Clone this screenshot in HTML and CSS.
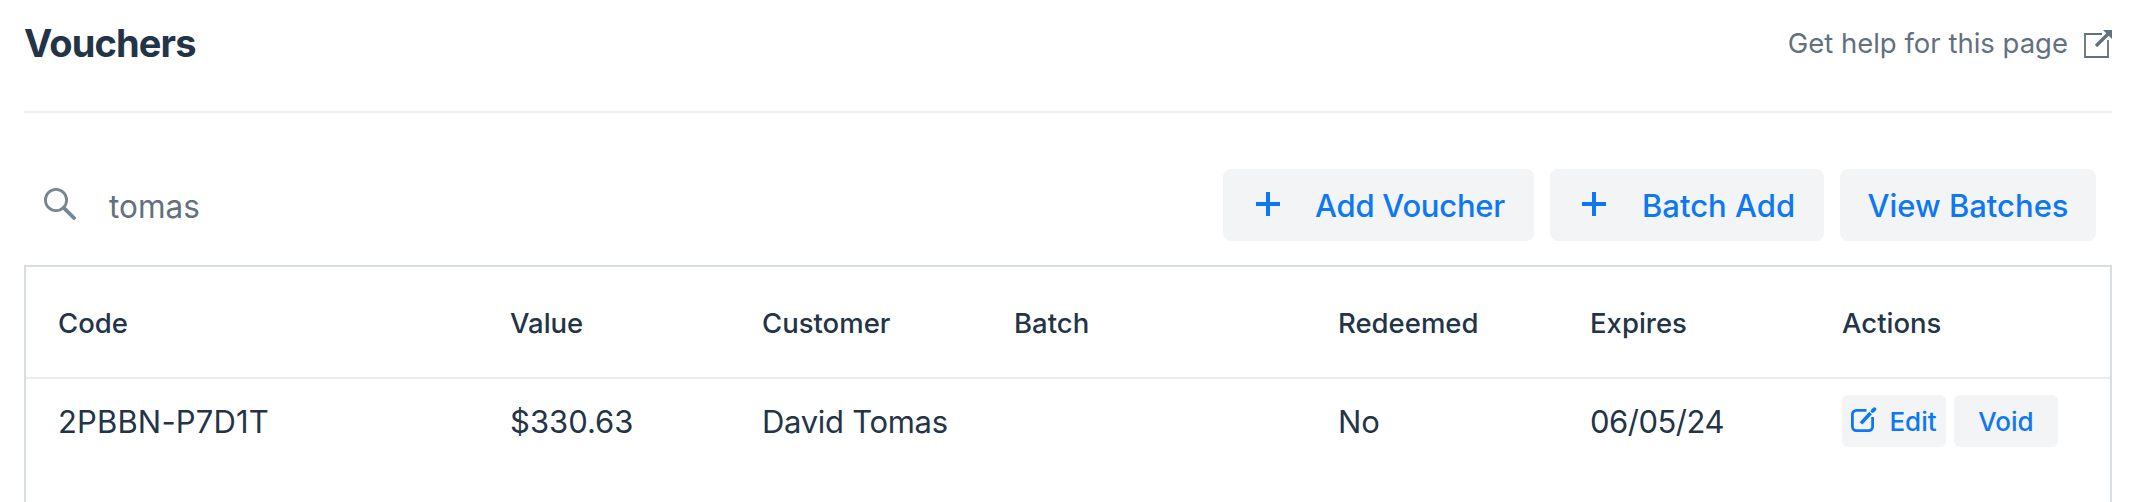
FILE: index.html
```
<!DOCTYPE html>
<html lang="en">
<head>
  <meta charset="utf-8">
  <title>Vouchers</title>
  <link rel="stylesheet" href="styles.css">
</head>
<body>
  <div class="page">
    <header class="page-header">
      <h1>Vouchers</h1>
      <a class="help-link" href="#">
        <span>Get help for this page</span>
        <svg width="28" height="28" viewBox="0 0 28 28" fill="none">
          <path d="M18 4H1v23h23V10" stroke="currentColor" stroke-width="1.8"/>
          <path d="M12 16L24 4" stroke="currentColor" stroke-width="3.4"/>
          <path d="M19 0h9v9z" fill="currentColor"/>
        </svg>
      </a>
    </header>

    <div class="toolbar">
      <label class="search">
        <svg width="32" height="32" viewBox="0 0 32 32" fill="none" stroke="currentColor">
          <circle cx="12" cy="12" r="10.6" stroke-width="2.8"/>
          <path d="M19.8 19.8L30 30" stroke-width="3.8" stroke-linecap="round"/>
        </svg>
        <span>tomas</span>
      </label>
      <div class="toolbar-buttons">
        <button class="btn btn-add">
          <svg width="24" height="24" viewBox="0 0 24 24"><path d="M10 0h4v10h10v4H14v10h-4V14H0v-4h10z" fill="currentColor"/></svg>
          <span>Add Voucher</span>
        </button>
        <button class="btn btn-batch">
          <svg width="24" height="24" viewBox="0 0 24 24"><path d="M10 0h4v10h10v4H14v10h-4V14H0v-4h10z" fill="currentColor"/></svg>
          <span>Batch Add</span>
        </button>
        <button class="btn btn-view"><span>View Batches</span></button>
      </div>
    </div>

    <div class="table">
      <div class="row row-head">
        <div>Code</div>
        <div>Value</div>
        <div>Customer</div>
        <div>Batch</div>
        <div>Redeemed</div>
        <div>Expires</div>
        <div>Actions</div>
      </div>
      <div class="row row-body">
        <div class="code">2PBBN-P7D1T</div>
        <div>$330.63</div>
        <div class="customer">David Tomas</div>
        <div></div>
        <div>No</div>
        <div class="expires">06/05/24</div>
        <div class="actions">
          <button class="btn-small btn-edit">
            <svg width="26" height="26" viewBox="0 0 26 26" fill="none" stroke="currentColor">
              <path d="M15.5 3.4H5.4a4 4 0 0 0-4 4v12.2a4 4 0 0 0 4 4h12.2a4 4 0 0 0 4-4V10" stroke-width="2.8"/>
              <path d="M10 16.4L19.6 6" stroke-width="3.6"/>
              <path d="M21.6 4L23.4 2.2" stroke-width="3.8" stroke-linecap="round"/>
            </svg>
            <span>Edit</span>
          </button>
          <button class="btn-small"><span>Void</span></button>
        </div>
      </div>
    </div>
  </div>
</body>
</html>
```

FILE: styles.css
```
* {
  box-sizing: border-box;
}
body {
  margin: 0;
  height: 502px;
  overflow: hidden;
  background: #fff;
  color: #243447;
  font-family: Inter, sans-serif;
}
svg {
  display: block;
  flex: none;
}
.page {
  height: 502px;
  padding: 0 26px 0 24px;
  display: flex;
  flex-direction: column;
}
.page-header {
  height: 113px;
  flex: none;
  display: flex;
  justify-content: space-between;
  align-items: flex-start;
  border-bottom: 2px solid #eee;
}
h1 {
  margin: 19px 0 0;
  font-size: 38px;
  line-height: 48px;
  font-weight: 700;
  letter-spacing: -0.85px;
}
.help-link {
  margin-top: 24px;
  display: flex;
  gap: 16px;
  align-items: flex-start;
  color: #637080;
  font-size: 27.5px;
  line-height: 38px;
  text-decoration: none;
}
.help-link svg {
  margin-top: 6px;
}
.toolbar {
  height: 152px;
  flex: none;
  display: flex;
  justify-content: space-between;
  padding: 56px 16px 0 20px;
}
.search {
  height: 74px;
  display: flex;
  align-items: center;
  gap: 33px;
  color: #637080;
  font-size: 31.5px;
}
.search svg {
  color: #788593;
  margin-bottom: 4px;
}
.toolbar-buttons {
  display: flex;
  gap: 16px;
}
button {
  border: 0;
  padding: 0;
  background: #f3f4f6;
  color: #0d78f2;
  font-family: inherit;
  font-weight: 500;
  display: flex;
  align-items: center;
}
.btn {
  height: 72px;
  border-radius: 8px;
  font-size: 31px;
}
.btn svg {
  margin-bottom: 2px;
}
.btn-add {
  width: 311px;
  padding-left: 33px;
  gap: 35px;
  letter-spacing: -0.25px;
}
.btn-batch {
  width: 274px;
  padding-left: 32px;
  gap: 36px;
}
.btn-view {
  width: 256px;
  justify-content: center;
}
.table {
  flex: 1;
  border: 2px solid #d9dee2;
  border-bottom: 0;
}
.row {
  display: grid;
  grid-template-columns: 452px 252px 252px 324px 252px 252px 1fr;
  padding-left: 32px;
  align-items: center;
}
.row-head {
  height: 112px;
  padding-top: 2px;
  border-bottom: 2px solid #e9ecf0;
  font-size: 27.5px;
  font-weight: 500;
}
.row-body {
  height: 84px;
  font-size: 31px;
}
.code {
  letter-spacing: 0.15px;
}
.customer {
  letter-spacing: -0.3px;
}
.expires {
  letter-spacing: -0.5px;
}
.actions {
  display: flex;
  gap: 8px;
}
.btn-small {
  width: 104px;
  height: 52px;
  border-radius: 6px;
  font-size: 26px;
  justify-content: center;
  gap: 12px;
}
.btn-edit svg {
  margin-bottom: 3px;
}
```
